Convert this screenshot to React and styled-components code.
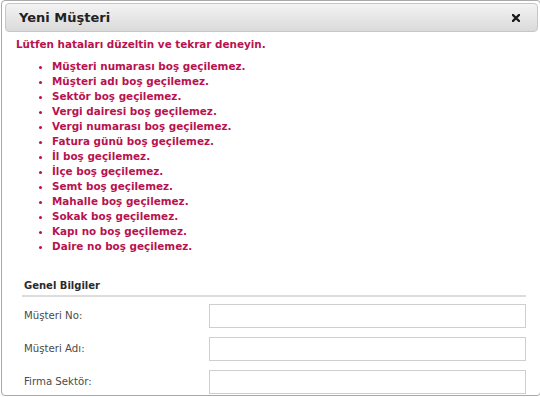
import styled, { createGlobalStyle } from "styled-components";

const GlobalStyle = createGlobalStyle`
    html, body {
        margin: 0;
        padding: 0;
        background: #ffffff;
    }
    body {
        font-family: "DejaVu Sans", Verdana, sans-serif;
    }
`;

const errors = [
    "Müşteri numarası boş geçilemez.",
    "Müşteri adı boş geçilemez.",
    "Sektör boş geçilemez.",
    "Vergi dairesi boş geçilemez.",
    "Vergi numarası boş geçilemez.",
    "Fatura günü boş geçilemez.",
    "İl boş geçilemez.",
    "İlçe boş geçilemez.",
    "Semt boş geçilemez.",
    "Mahalle boş geçilemez.",
    "Sokak boş geçilemez.",
    "Kapı no boş geçilemez.",
    "Daire no boş geçilemez.",
];

const fields = ["Müşteri No:", "Müşteri Adı:", "Firma Sektör:"];

const CloseIcon = () => (
    <svg width="8" height="8" viewBox="0 0 8 8">
        <path d="M1 1 L7 7 M7 1 L1 7" stroke="#1a1a1a" strokeWidth="2.3" strokeLinecap="square" />
    </svg>
);

const App = () => {
    return (
        <>
            <GlobalStyle />
            <Dialog>
                <TitleBar>
                    <h2>Yeni Müşteri</h2>
                    <CloseButton>
                        <CloseIcon />
                    </CloseButton>
                </TitleBar>
                <Body>
                    <ErrorSummary>
                        <p>Lütfen hataları düzeltin ve tekrar deneyin.</p>
                        <ul>
                            {errors.map((e) => (
                                <li key={e}>{e}</li>
                            ))}
                        </ul>
                    </ErrorSummary>
                    <Fieldset>
                        <Legend>Genel Bilgiler</Legend>
                        {fields.map((f) => (
                            <FieldRow key={f}>
                                <label>{f}</label>
                                <TextInput type="text" />
                            </FieldRow>
                        ))}
                    </Fieldset>
                </Body>
            </Dialog>
        </>
    );
};

const Dialog = styled.div`
    box-sizing: border-box;
    width: 540px;
    height: 396px;
    overflow: hidden;
    margin-left: 1px;
    border: 1px solid #a9a9a9;
    border-radius: 4px;
    padding: 2px;
    background: #ffffff;
`;

const TitleBar = styled.div`
    box-sizing: border-box;
    height: 29px;
    margin-left: 1px;
    display: flex;
    align-items: center;
    justify-content: space-between;
    padding: 0 17px 0 13px;
    border: 1px solid #c6c6c6;
    border-radius: 4px;
    background: linear-gradient(#f3f3f3, #dadada);
    h2 {
        margin: 0;
        font-size: 13px;
        font-weight: bold;
        color: #222222;
    }
`;

const CloseButton = styled.button`
    display: flex;
    align-items: center;
    padding: 0;
    border: none;
    background: transparent;
    cursor: pointer;
`;

const Body = styled.div`
    padding: 0 10px 0 12px;
`;

const ErrorSummary = styled.div`
    color: #b8124f;
    font-size: 10.4px;
    font-weight: bold;
    p {
        margin: 5px 0 7px 0;
        line-height: 15px;
    }
    ul {
        margin: 0;
        padding-left: 36px;
        list-style: disc;
    }
    li {
        line-height: 15px;
    }
`;

const Fieldset = styled.div`
    margin-top: 26px;
    padding: 0 2px 0 5px;
`;

const Legend = styled.div`
    font-size: 10px;
    font-weight: bold;
    color: #2b2b2b;
    margin: 0 0 2px 1px;
    padding: 0 0 4px 2px;
    border-bottom: 2px solid #dddddd;
`;

const FieldRow = styled.div`
    display: flex;
    align-items: center;
    justify-content: space-between;
    height: 33px;
    padding-left: 3px;
    label {
        font-size: 10.2px;
        color: #4a4a4a;
    }
`;

const TextInput = styled.input`
    box-sizing: border-box;
    width: 317px;
    height: 24px;
    border: 1px solid #cfcfcf;
    background: #ffffff;
    margin: 0;
`;

export default App;
